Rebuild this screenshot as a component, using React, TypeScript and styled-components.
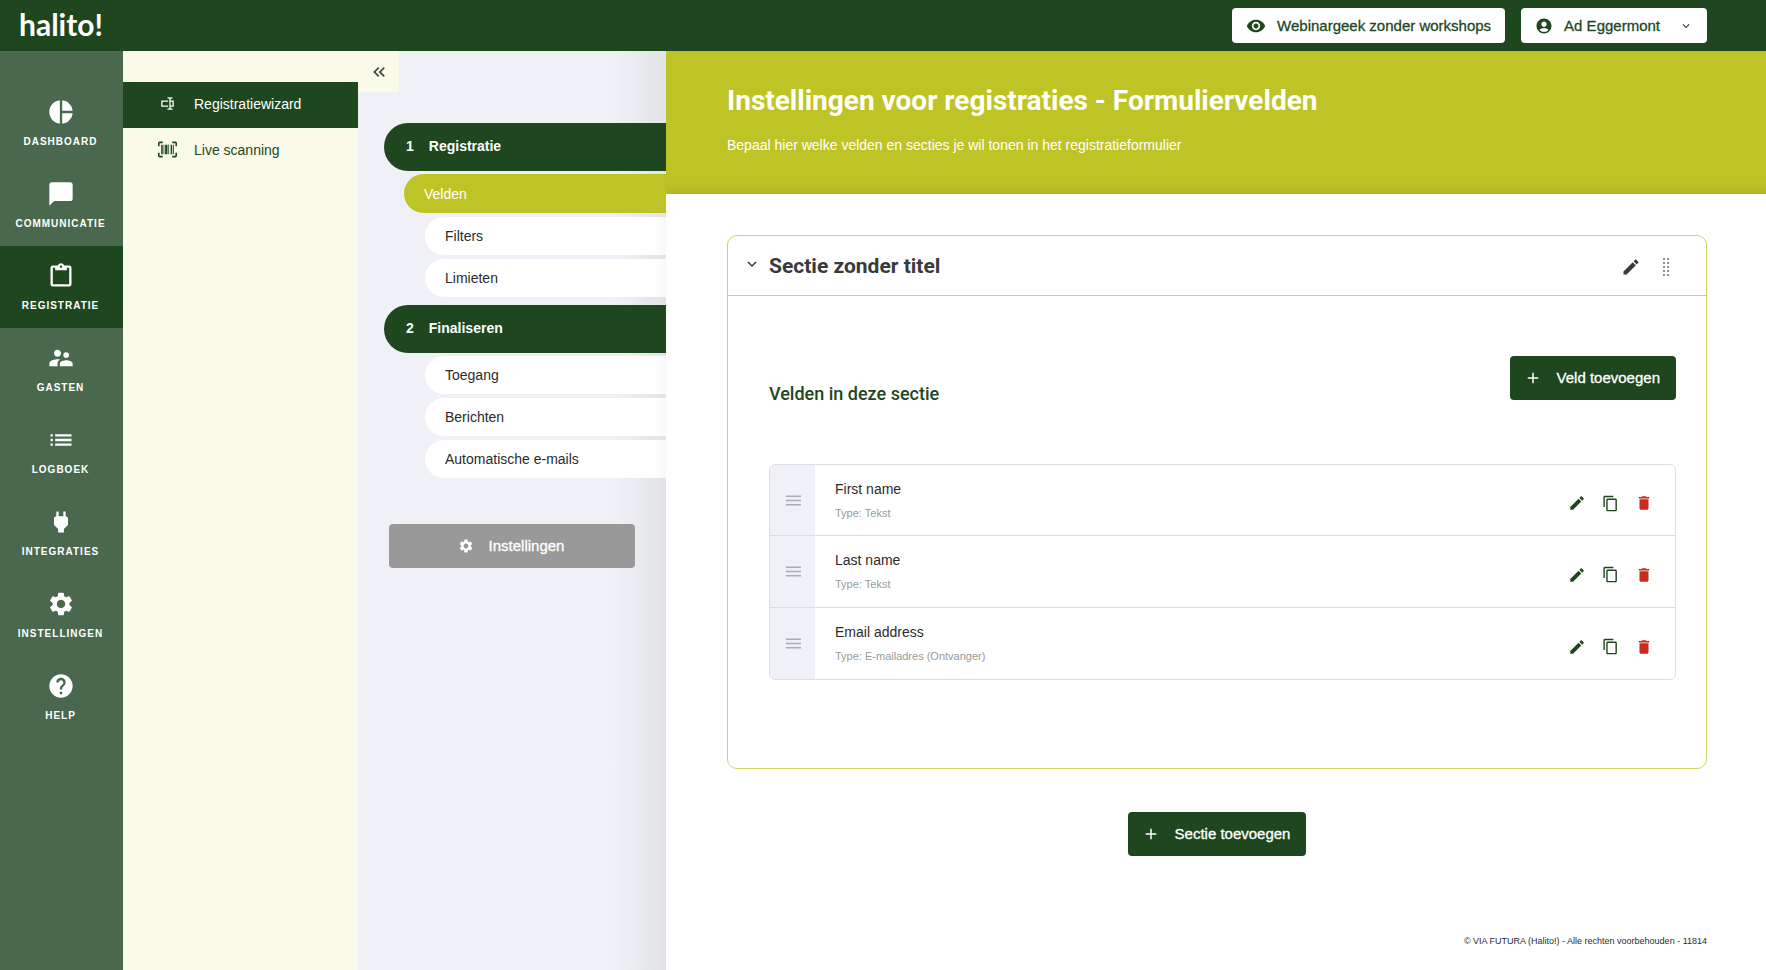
import React from "react";
import styled, { createGlobalStyle, css } from "styled-components";
import {
  MdAccountCircle,
  MdAdd,
  MdChatBubble,
  MdContentCopy,
  MdDelete,
  MdEdit,
  MdExpandMore,
  MdHelp,
  MdKeyboardDoubleArrowLeft,
  MdList,
  MdPieChart,
  MdPower,
  MdSettings,
  MdSupervisorAccount,
  MdVisibility,
} from "react-icons/md";

const color = {
  dark: "#1e471f",
  nav: "#4a684d",
  lime: "#bfc426",
  cream: "#f9faea",
  panel: "#eff1f6",
  grey: "#999999",
  line: "#dcdde0",
  red: "#cc2a1c",
  text: "#2b2b2b",
};

const sans = `"Liberation Sans", Arial, sans-serif`;
const heading = `Roboto, sans-serif`;

const GlobalStyle = createGlobalStyle`
  * { box-sizing: border-box; }
  body { margin: 0; font-family: ${sans}; font-size: 15px; color: ${color.text}; background: #fff; }
  h1, h2, h3, p, ul, ol { margin: 0; padding: 0; }
  ul, ol { list-style: none; }
  a { color: inherit; text-decoration: none; }
  button { font: inherit; color: inherit; border: 0; background: none; padding: 0; cursor: pointer; }
  svg { display: block; flex: none; }
`;

const Page = styled.div`
  display: flex;
  flex-direction: column;
  min-height: 100vh;
`;

const TopBar = styled.header`
  display: flex;
  align-items: center;
  gap: 16px;
  height: 51px;
  padding: 0 59px 0 19px;
  background: ${color.dark};
`;

const Logo = styled.a`
  margin-right: auto;
  padding-bottom: 3px;
  color: #fff;
  font: 700 30px/40px Lato, sans-serif;
`;

const TopButton = styled.button`
  display: flex;
  align-items: center;
  height: 35px;
  padding: 0 14px;
  gap: 11px;
  border-radius: 4px;
  background: #fff;
  color: ${color.dark};
`;

const TopLabel = styled.span<{ $trailing?: boolean }>`
  -webkit-text-stroke: 0.3px currentColor;
  margin-right: ${(p) => (p.$trailing ? "8px" : "0")};
`;

const Body = styled.div`
  display: flex;
  flex: 1;
`;

const MainNav = styled.nav`
  width: 123px;
  flex: none;
  padding-top: 31px;
  background: ${color.nav};
`;

const NavLink = styled.a<{ $active?: boolean }>`
  display: flex;
  flex-direction: column;
  align-items: center;
  gap: 10px;
  height: 82px;
  padding: 16px 2px 0 0;
  color: #fff;
  font-size: 10px;
  line-height: 12px;
  font-weight: 700;
  letter-spacing: 1px;
  text-transform: uppercase;
  background: ${(p) => (p.$active ? color.dark : "transparent")};
`;

const SubNav = styled.nav`
  width: 235px;
  flex: none;
  padding-top: 31px;
  background: ${color.cream};
`;

const SubLink = styled.a<{ $active?: boolean }>`
  display: grid;
  grid-template-columns: 20px 1fr;
  justify-items: start;
  align-items: center;
  column-gap: 17px;
  height: 46px;
  padding: 0 0 3px 34px;
  font-size: 14px;
  background: ${(p) => (p.$active ? color.dark : "transparent")};
  color: ${(p) => (p.$active ? "#fff" : color.dark)};

  svg {
    justify-self: center;
  }
`;

const StepsPanel = styled.aside`
  display: flex;
  flex-direction: column;
  align-items: flex-start;
  width: 308px;
  flex: none;
  background: linear-gradient(to left, #e2e3e7 0, ${color.panel} 52px);
`;

const CollapseButton = styled.button`
  display: grid;
  place-items: center;
  width: 41px;
  height: 41px;
  background: ${color.cream};
  color: #444;
`;

const StepList = styled.ol`
  display: flex;
  flex-direction: column;
  align-self: stretch;
  gap: 8px;
  margin: 31px 0 46px 26px;
`;

const StepGroup = styled.li`
  display: flex;
  flex-direction: column;
  gap: 3px;
`;

const StepHeader = styled.a`
  display: flex;
  align-items: center;
  gap: 15px;
  height: 48px;
  padding: 0 0 2px 22px;
  border-radius: 24px 0 0 24px;
  background: ${color.dark};
  color: #fff;
  font-size: 14px;
  font-weight: 700;
`;

const SubSteps = styled.ul`
  display: flex;
  flex-direction: column;
  gap: 4px;
`;

const SubStep = styled.a<{ $active?: boolean }>`
  display: flex;
  align-items: center;
  height: 38px;
  margin-left: 41px;
  padding-left: 20px;
  border-radius: 20px 0 0 20px;
  background: linear-gradient(to left, #f8f8f8, #fff 12px);
  font-size: 14px;
  ${(p) =>
    p.$active &&
    css`
      height: 39px;
      margin-left: 20px;
      background: ${color.lime};
      color: #fff;
    `}
`;

const Button = styled.button<{ $wide?: boolean }>`
  display: flex;
  align-items: center;
  justify-content: center;
  gap: 15px;
  height: 44px;
  padding: 0 16px 1px 14px;
  border-radius: 4px;
  background: ${color.dark};
  color: #fff;
  -webkit-text-stroke: 0.3px currentColor;
  ${(p) =>
    p.$wide &&
    css`
      width: 246px;
      margin-left: 31px;
      background: ${color.grey};
    `}
`;

const Content = styled.main`
  display: flex;
  flex-direction: column;
  flex: 1;
  min-width: 0;
`;

const Banner = styled.div`
  height: 143px;
  padding: 32px 61px;
  background: linear-gradient(to top, #b3b724, ${color.lime} 12px);
  color: #fff;
`;

const Title = styled.h1`
  font: 700 28px/36px ${heading};
`;

const Intro = styled.p`
  margin-top: 17px;
  font-size: 14px;
  line-height: 18px;
`;

const Sections = styled.div`
  display: flex;
  flex-direction: column;
  align-items: center;
  gap: 43px;
  padding: 41px 59px 0 61px;
`;

const Section = styled.section`
  align-self: stretch;
  border: 1px solid #ced364;
  border-radius: 10px;
`;

const SectionHead = styled.header`
  display: flex;
  align-items: center;
  gap: 8px;
  height: 60px;
  padding: 0 30px 0 15px;
  border-bottom: 1px solid #ced364;
  color: #3a3a3a;
`;

const ToggleButton = styled.button`
  padding-bottom: 4px;
`;

const SectionTitle = styled.h2`
  margin-right: auto;
  font: 700 21px/28px ${heading};
`;

const HeadActions = styled.div`
  display: flex;
  align-items: center;
  gap: 15px;
  padding-top: 3px;
`;

const SectionBody = styled.div`
  padding: 60px 30px 88px 41px;
`;

const FieldsHead = styled.div`
  display: flex;
  justify-content: space-between;
  align-items: flex-start;
  height: 108px;
`;

const FieldsTitle = styled.h3`
  padding-top: 26px;
  color: ${color.dark};
  font: 500 18px/24px ${heading};
`;

const FieldList = styled.ul`
  border: 1px solid ${color.line};
  border-radius: 6px;
  overflow: hidden;
`;

const FieldRow = styled.li`
  display: flex;
  height: 70px;

  & + & {
    height: 72px;
    border-top: 1px solid ${color.line};
  }
`;

const Handle = styled.button`
  display: grid;
  place-items: center;
  width: 45px;
  padding-left: 2px;
  background: ${color.panel};
  color: #a9abb0;
  cursor: grab;
`;

const FieldText = styled.div`
  flex: 1;
  padding: 15px 20px;
`;

const FieldName = styled.p`
  font-size: 14px;
  line-height: 18px;
`;

const FieldType = styled.p`
  margin-top: 8px;
  font-size: 11px;
  line-height: 14px;
  color: #999;
`;

const RowActions = styled.div`
  display: flex;
  align-items: center;
  gap: 16px;
  padding: 6px 22px 0 0;
  color: ${color.dark};
`;

const IconButton = styled.button<{ $danger?: boolean }>`
  color: ${(p) => (p.$danger ? color.red : "inherit")};
`;

const Footer = styled.footer`
  margin-top: auto;
  padding: 0 59px 22px;
  font-size: 9px;
  line-height: 14px;
  text-align: right;
`;

const ClipboardIcon = () => (
  <svg width="28" height="28" viewBox="0 0 24 24" fill="currentColor" aria-hidden="true">
    <path d="M19,3H14.82C14.4,1.84 13.3,1 12,1C10.7,1 9.6,1.84 9.18,3H5A2,2 0 0,0 3,5V19A2,2 0 0,0 5,21H19A2,2 0 0,0 21,19V5A2,2 0 0,0 19,3M12,3A1,1 0 0,1 13,4A1,1 0 0,1 12,5A1,1 0 0,1 11,4A1,1 0 0,1 12,3M7,7H17V5H19V19H5V5H7V7Z" />
  </svg>
);

const TextboxIcon = () => (
  <svg width="15" height="15" viewBox="0 0 24 24" fill="currentColor" aria-hidden="true">
    <path d="M17,7H22V17H17V19A1,1 0 0,0 18,20H20V22H17.5C16.95,22 16,21.55 16,21C16,21.55 15.05,22 14.5,22H12V20H14A1,1 0 0,0 15,19V5A1,1 0 0,0 14,4H12V2H14.5C15.05,2 16,2.45 16,3C16,2.45 16.95,2 17.5,2H20V4H18A1,1 0 0,0 17,5V7M2,7H13V9H4V15H13V17H2V7M20,15V9H17V15H20Z" />
  </svg>
);

const BarcodeIcon = () => (
  <svg width="19" height="19" viewBox="0 0 24 24" fill="currentColor" aria-hidden="true">
    <path d="M4,6H6V18H4V6M7,6H8V18H7V6M9,6H12V18H9V6M13,6H14V18H13V6M16,6H18V18H16V6M19,6H20V18H19V6M2,4V8H0V4A2,2 0 0,1 2,2H6V4H2M22,2A2,2 0 0,1 24,4V8H22V4H18V2H22M2,16V20H6V22H2A2,2 0 0,1 0,20V16H2M22,20V16H24V20A2,2 0 0,1 22,22H18V20H22Z" />
  </svg>
);

const DotsIcon = () => (
  <svg width="20" height="18" viewBox="0 0 20 18" fill="#555" aria-hidden="true">
    {[1, 5, 9, 13, 17].map((y) => (
      <React.Fragment key={y}>
        <circle cx="8" cy={y} r="0.9" />
        <circle cx="12" cy={y} r="0.9" />
      </React.Fragment>
    ))}
  </svg>
);

const GripIcon = () => (
  <svg width="15" height="11" viewBox="0 0 15 11" fill="currentColor" aria-hidden="true">
    <path d="M0 0.5h15v1.6H0zM0 4.7h15v1.6H0zM0 8.9h15v1.6H0z" />
  </svg>
);

const navItems = [
  { label: "Dashboard", icon: <MdPieChart size={28} /> },
  { label: "Communicatie", icon: <MdChatBubble size={28} /> },
  { label: "Registratie", icon: <ClipboardIcon />, active: true },
  { label: "Gasten", icon: <MdSupervisorAccount size={28} /> },
  { label: "Logboek", icon: <MdList size={28} /> },
  { label: "Integraties", icon: <MdPower size={28} /> },
  { label: "Instellingen", icon: <MdSettings size={28} /> },
  { label: "Help", icon: <MdHelp size={28} /> },
];

const steps = [
  { title: "Registratie", items: ["Velden", "Filters", "Limieten"] },
  { title: "Finaliseren", items: ["Toegang", "Berichten", "Automatische e-mails"] },
];

const fields = [
  { name: "First name", type: "Tekst" },
  { name: "Last name", type: "Tekst" },
  { name: "Email address", type: "E-mailadres (Ontvanger)" },
];

export default function App() {
  return (
    <Page>
      <GlobalStyle />
      <TopBar>
        <Logo href="#">halito!</Logo>
        <TopButton>
          <MdVisibility size={20} />
          <TopLabel>Webinargeek zonder workshops</TopLabel>
        </TopButton>
        <TopButton>
          <MdAccountCircle size={18} />
          <TopLabel $trailing>Ad Eggermont</TopLabel>
          <MdExpandMore size={14} />
        </TopButton>
      </TopBar>
      <Body>
        <MainNav>
          {navItems.map((item) => (
            <NavLink key={item.label} href="#" $active={item.active}>
              {item.icon}
              {item.label}
            </NavLink>
          ))}
        </MainNav>
        <SubNav>
          <SubLink href="#" $active>
            <TextboxIcon />
            Registratiewizard
          </SubLink>
          <SubLink href="#">
            <BarcodeIcon />
            Live scanning
          </SubLink>
        </SubNav>
        <StepsPanel>
          <CollapseButton aria-label="Menu inklappen">
            <MdKeyboardDoubleArrowLeft size={20} />
          </CollapseButton>
          <StepList>
            {steps.map((step, index) => (
              <StepGroup key={step.title}>
                <StepHeader href="#">
                  <span>{index + 1}</span>
                  {step.title}
                </StepHeader>
                <SubSteps>
                  {step.items.map((item) => (
                    <li key={item}>
                      <SubStep href="#" $active={item === "Velden"}>
                        {item}
                      </SubStep>
                    </li>
                  ))}
                </SubSteps>
              </StepGroup>
            ))}
          </StepList>
          <Button $wide>
            <MdSettings size={16} />
            Instellingen
          </Button>
        </StepsPanel>
        <Content>
          <Banner>
            <Title>Instellingen voor registraties - Formuliervelden</Title>
            <Intro>Bepaal hier welke velden en secties je wil tonen in het registratieformulier</Intro>
          </Banner>
          <Sections>
            <Section>
              <SectionHead>
                <ToggleButton aria-label="Sectie inklappen">
                  <MdExpandMore size={18} />
                </ToggleButton>
                <SectionTitle>Sectie zonder titel</SectionTitle>
                <HeadActions>
                  <IconButton aria-label="Sectie bewerken">
                    <MdEdit size={20} />
                  </IconButton>
                  <IconButton aria-label="Sectie verplaatsen">
                    <DotsIcon />
                  </IconButton>
                </HeadActions>
              </SectionHead>
              <SectionBody>
                <FieldsHead>
                  <FieldsTitle>Velden in deze sectie</FieldsTitle>
                  <Button>
                    <MdAdd size={18} />
                    Veld toevoegen
                  </Button>
                </FieldsHead>
                <FieldList>
                  {fields.map((field) => (
                    <FieldRow key={field.name}>
                      <Handle aria-label="Veld verplaatsen">
                        <GripIcon />
                      </Handle>
                      <FieldText>
                        <FieldName>{field.name}</FieldName>
                        <FieldType>Type: {field.type}</FieldType>
                      </FieldText>
                      <RowActions>
                        <IconButton aria-label="Bewerken">
                          <MdEdit size={18} />
                        </IconButton>
                        <IconButton aria-label="Dupliceren">
                          <MdContentCopy size={17} />
                        </IconButton>
                        <IconButton aria-label="Verwijderen" $danger>
                          <MdDelete size={18} />
                        </IconButton>
                      </RowActions>
                    </FieldRow>
                  ))}
                </FieldList>
              </SectionBody>
            </Section>
            <Button>
              <MdAdd size={18} />
              Sectie toevoegen
            </Button>
          </Sections>
          <Footer>© VIA FUTURA (Halito!) - Alle rechten voorbehouden - 11814</Footer>
        </Content>
      </Body>
    </Page>
  );
}
